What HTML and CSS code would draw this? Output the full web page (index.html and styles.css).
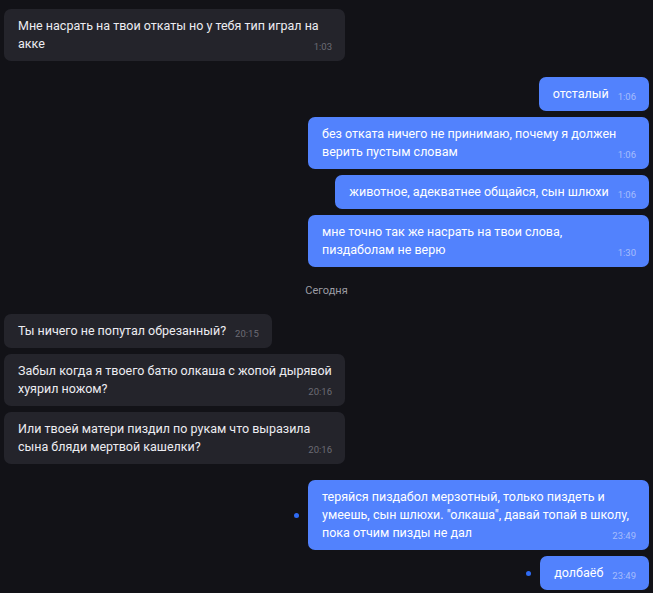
FILE: index.html
```html
<!DOCTYPE html>
<html lang="ru">
<head>
<meta charset="utf-8">
<link rel="stylesheet" href="styles.css">
</head>
<body>
<div class="chat">
  <div class="row in"><div class="bubble">Мне насрать на твои откаты но у тебя тип играл на акке<span class="time">1:03</span></div></div>

  <div class="row out gap-top"><div class="bubble">отсталый<span class="time">1:06</span></div></div>
  <div class="row out"><div class="bubble">без отката ничего не принимаю, почему я должен верить пустым словам<span class="time">1:06</span></div></div>
  <div class="row out"><div class="bubble">животное, адекватнее общайся, сын шлюхи<span class="time">1:06</span></div></div>
  <div class="row out"><div class="bubble">мне точно так же насрать на твои слова, пиздаболам не верю<span class="time">1:30</span></div></div>

  <div class="date">Сегодня</div>

  <div class="row in"><div class="bubble">Ты ничего не попутал обрезанный?<span class="time">20:15</span></div></div>
  <div class="row in"><div class="bubble">Забыл когда я твоего батю олкаша с жопой дырявой хуярил ножом?<span class="time">20:16</span></div></div>
  <div class="row in"><div class="bubble">Или твоей матери пиздил по рукам что выразила сына бляди мертвой кашелки?<span class="time">20:16</span></div></div>

  <div class="row out gap-top"><span class="dot"></span><div class="bubble">теряйся пиздабол мерзотный, только пиздеть и умеешь, сын шлюхи. "олкаша", давай топай в школу, пока отчим пизды не дал<span class="time">23:49</span></div></div>
  <div class="row out"><span class="dot"></span><div class="bubble">долбаёб<span class="time">23:49</span></div></div>
</div>
</body>
</html>
```

FILE: styles.css
```css
html, body {
  margin: 0;
  background: #121217;
}
body {
  font-family: Roboto, "Noto Sans", sans-serif;
  font-size: 12.5px;
  color: #ececf1;
  overflow: hidden;
}
.chat {
  display: flex;
  flex-direction: column;
  gap: 6px;
  padding: 9px 4px;
}
.row {
  display: flex;
  align-items: center;
}
.row.in { justify-content: flex-start; }
.row.out { justify-content: flex-end; gap: 9px; }
.gap-top { margin-top: 10px; }
.bubble {
  max-width: 341px;
  box-sizing: border-box;
  padding: 8px 13px 8px 14px;
  line-height: 18px;
  border-radius: 7px;
  background: #24242b;
  color: #ececf1;
}
.out .bubble {
  background: #5282fd;
  color: #ffffff;
}
.time {
  float: right;
  margin: 3px 0 -3px 9px;
  font-size: 9.5px;
  line-height: 18px;
  color: #6c6c75;
}
.out .time {
  color: #a6bdfc;
}
.dot {
  width: 5px;
  height: 5px;
  border-radius: 50%;
  background: #2f6bf3;
  flex: none;
}
.date {
  text-align: center;
  font-size: 11px;
  line-height: 13px;
  color: #9c9ca4;
  padding: 11px 0;
}
```
